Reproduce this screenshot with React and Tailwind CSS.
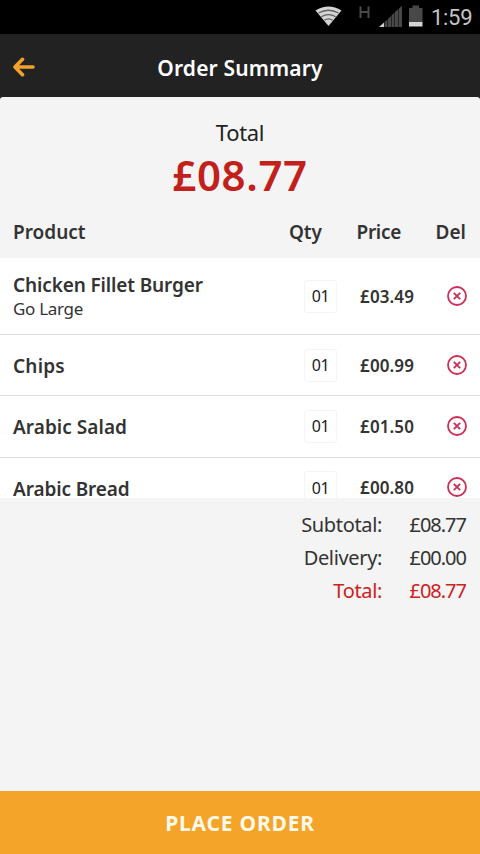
import { useState } from "react";

const productos = [
  { id: 1, name: "Chicken Fillet Burger", note: "Go Large", qty: "01", price: "£03.49", height: "h-[77px]", tracking: "tracking-[-0.13px]" },
  { id: 2, name: "Chips", qty: "01", price: "£00.99", height: "h-[61px]", tracking: "tracking-[0.2px]" },
  { id: 3, name: "Arabic Salad", qty: "01", price: "£01.50", height: "h-[62px] pb-px", tracking: "tracking-[0.05px]" },
  { id: 4, name: "Arabic Bread", qty: "01", price: "£00.80", height: "h-[60px]", tracking: "tracking-[-0.12px]" },
];

function StatusBar() {
  return (
    <div className="h-[34px] shrink-0 bg-black flex items-start">
      <svg className="w-[131px] h-[34px] ml-[300px]" viewBox="300 0 131 34">
        <path d="M315.500 10.500Q328.500 2.500 341.500 10.500L328.500 26Z" fill="#d4d4d4" />
        <path d="M318.500 13Q328.500 7.500 338.500 13M321.300 16.800Q328.500 12.500 335.700 16.800M324.300 20.300Q328.500 17.500 332.700 20.300" fill="none" stroke="#606060" strokeWidth="1.300" />
        <path d="M360.500 6.500V18M368.500 6.500V18M360.500 12H368.500" fill="none" stroke="#4a4a4a" strokeWidth="2" />
        <path d="M379 27L384 22.500V27Z" fill="#d0d0d0" />
        <path d="M384.500 22L387.500 19.500V27H384.500ZM388 19L391 16V27H388ZM391.500 15.500L394.500 12.500V27H391.500ZM395 12L398.500 9V27H395ZM399 8.500L402 6V27H399Z" fill="#484848" />
        <path d="M412.500 5.500H419V8H422.500V22H409V8H412.500Z" fill="#484848" />
        <path d="M409 22H422.500V26.500H409Z" fill="#d4d4d4" />
      </svg>
      <span className="font-[Roboto] text-[22px] leading-[35px] tracking-[-0.3px] text-[#c4c4c4]">1:59</span>
    </div>
  );
}

function DeleteIcon() {
  return (
    <svg className="w-5 h-5" viewBox="0 0 20 20" fill="none" stroke="#cc2f57">
      <circle cx="10" cy="10" r="9" strokeWidth="1.8" />
      <path d="M6.800 6.800l6.400 6.400M13.200 6.800l-6.400 6.400" strokeWidth="1.900" />
    </svg>
  );
}

function ProductRow({ item, onDelete }) {
  return (
    <div className={`${item.height} shrink-0 flex items-center border-b border-[#dedede] px-[13px]`}>
      <div className="flex-1 pt-0.5 text-[#333]">
        <p className={`text-[19px] leading-6 font-semibold ${item.tracking}`}>{item.name}</p>
        {item.note && <p className="text-[17px] leading-6 tracking-[-0.3px]">{item.note}</p>}
      </div>
      <div className="w-[33px] h-[33px] border border-[#f4f4f4] rounded-[3px] flex items-center justify-center text-[16px] text-[#222] tracking-[-0.5px]">
        {item.qty}
      </div>
      <div className="w-[77px] pt-px text-right text-[17px] leading-6 font-semibold text-[#333] tracking-[0.1px]">{item.price}</div>
      <button onClick={() => onDelete(item.id)} className="ml-[33px] pb-px">
        <DeleteIcon />
      </button>
    </div>
  );
}

export default function App() {
  const [items, setItems] = useState(productos);

  function handleDelete(id) {
    setItems((list) => list.filter((i) => i.id !== id));
  }

  return (
    <div className="w-[480px] h-[854px] overflow-hidden flex flex-col bg-[#222] font-['Noto_Sans',sans-serif]">
      <StatusBar />
      <header className="h-[63px] shrink-0 grid grid-cols-[100px_1fr_100px] items-center pt-[4px]">
        <button className="pl-[13px] pb-px">
          <svg className="w-[23px] h-5" viewBox="0 0 23 20" fill="none" stroke="#f2a12b" strokeWidth="3.6" strokeLinecap="round" strokeLinejoin="round">
            <path d="M9.500 2.300L2 10l7.500 7.700M2.500 10H20" />
          </svg>
        </button>
        <h1 className="text-center text-[21px] leading-8 tracking-[0.15px] font-semibold text-white whitespace-nowrap">Order Summary</h1>
      </header>

      <main className="flex-1 flex flex-col bg-[#f4f4f4] rounded-t-[3px] overflow-hidden">
        <div className="pt-5 text-center">
          <p className="text-[22px] leading-[30px] tracking-[-0.3px] text-[#222]">Total</p>
          <p className="pb-px text-[42px] leading-[56px] tracking-[0.6px] font-semibold text-[#c2201a]">£08.77</p>
        </div>
        <div className="h-[54px] pt-[16px] pb-[14px] pl-[13px] pr-[14px] flex items-center text-[19px] leading-6 font-semibold text-[#333]">
          <span className="flex-1">Product</span>
          <span className="w-[60px] text-right">Qty</span>
          <span className="w-[79px] text-right tracking-[-0.3px]">Price</span>
          <span className="w-[65px] text-right">Del</span>
        </div>

        <div className="h-[240px] bg-white flex flex-col overflow-hidden">
          {items.map((item) => (
            <ProductRow key={item.id} item={item} onDelete={handleDelete} />
          ))}
        </div>

        <div className="pt-[10px] pr-[14px] text-[20px] leading-[33px] tracking-[-0.35px] text-[#333] text-right">
          <div className="flex justify-end">
            <span>Subtotal:</span>
            <span className="w-[84px] tracking-[-1px]">£08.77</span>
          </div>
          <div className="flex justify-end">
            <span>Delivery:</span>
            <span className="w-[84px] tracking-[-1px]">£00.00</span>
          </div>
          <div className="flex justify-end text-[#cc2222]">
            <span>Total:</span>
            <span className="w-[84px] tracking-[-1px]">£08.77</span>
          </div>
        </div>
      </main>

      <button className="h-[63px] shrink-0 bg-[#f4a428] text-[#fff9ea] text-[21px] leading-8 tracking-[0.8px] font-bold">PLACE ORDER</button>
    </div>
  );
}
